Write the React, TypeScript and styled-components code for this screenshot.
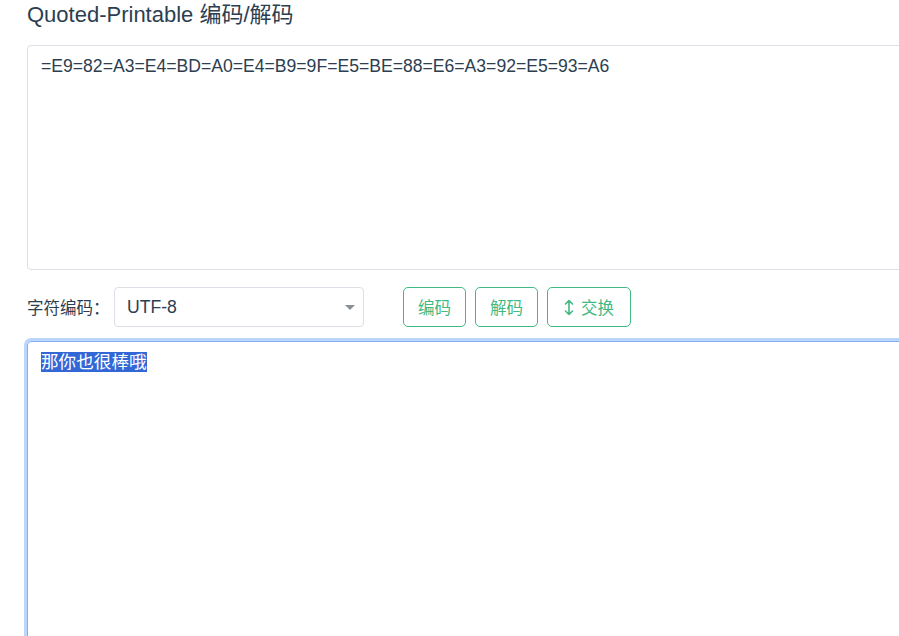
import styled, { createGlobalStyle } from "styled-components";

const GlobalStyle = createGlobalStyle`
  html, body {
    margin: 0;
    padding: 0;
    background: #ffffff;
    overflow: hidden;
  }
  body {
    font-family: "Liberation Sans", "Noto Sans CJK SC", Arial, sans-serif;
    color: #2c3e50;
  }
`;

const Page = styled.div`
  padding: 0 0 0 27px;
  width: 1000px;
`;

const Title = styled.h1`
  margin: 0;
  font-size: 22px;
  font-weight: 400;
  line-height: 30px;
  color: #2c3e50;
`;

const Source = styled.textarea`
  display: block;
  box-sizing: border-box;
  margin-top: 15px;
  width: 960px;
  height: 225px;
  padding: 8px 13px;
  border: 1px solid #dcdfe6;
  border-radius: 4px;
  resize: none;
  outline: none;
  font-family: inherit;
  font-size: 17.6px;
  line-height: 25px;
  color: #2c3e50;
`;

const Toolbar = styled.div`
  display: flex;
  align-items: center;
  margin-top: 17px;
  height: 40px;
`;

const Label = styled.span`
  width: 87px;
  font-size: 16.5px;
  color: #2c3e50;
`;

const Select = styled.div`
  position: relative;
  box-sizing: border-box;
  display: flex;
  align-items: center;
  width: 250px;
  height: 40px;
  padding-left: 12px;
  border: 1px solid #dcdfe6;
  border-radius: 4px;
  font-size: 17.6px;
  color: #2c3e50;

  &::after {
    content: "";
    position: absolute;
    right: 8px;
    top: 17px;
    border-left: 5px solid transparent;
    border-right: 5px solid transparent;
    border-top: 5px solid #8a8f96;
  }
`;

const Buttons = styled.div`
  display: flex;
  gap: 9px;
  margin-left: 39px;
`;

const Button = styled.button<{ $wide?: boolean }>`
  box-sizing: border-box;
  display: flex;
  align-items: center;
  justify-content: center;
  gap: 7px;
  width: ${({ $wide }) => ($wide ? "84px" : "63px")};
  height: 40px;
  padding: 0;
  background: #ffffff;
  border: 1px solid #42b983;
  border-radius: 5px;
  color: #42b983;
  font-family: inherit;
  font-size: 16.5px;
  cursor: pointer;
`;

const Output = styled.div`
  box-sizing: border-box;
  margin-top: 14px;
  width: 960px;
  height: 320px;
  padding: 8px 13px;
  border: 1px solid #7fb0f6;
  border-radius: 4px;
  box-shadow: 0 0 0 3px #bcd5fb;
  font-size: 17.6px;
  line-height: 25px;
  color: #2c3e50;
`;

const Selected = styled.span`
  background: #3367d6;
  color: #ffffff;
`;

const SwapIcon = () => (
  <svg width="10" height="17" viewBox="0 0 10 17" fill="none">
    <path
      d="M5 1.5v14M1.5 5L5 1.5 8.5 5M1.5 12L5 15.5 8.5 12"
      stroke="#42b983"
      strokeWidth="1.6"
      strokeLinecap="round"
      strokeLinejoin="round"
    />
  </svg>
);

const App: React.FC = () => {
  return (
    <Page>
      <GlobalStyle />
      <Title>Quoted-Printable 编码/解码</Title>
      <Source
        readOnly
        value="=E9=82=A3=E4=BD=A0=E4=B9=9F=E5=BE=88=E6=A3=92=E5=93=A6"
      />
      <Toolbar>
        <Label>字符编码：</Label>
        <Select>UTF-8</Select>
        <Buttons>
          <Button>编码</Button>
          <Button>解码</Button>
          <Button $wide>
            <SwapIcon />
            交换
          </Button>
        </Buttons>
      </Toolbar>
      <Output>
        <Selected>那你也很棒哦</Selected>
      </Output>
    </Page>
  );
};

export default App;
